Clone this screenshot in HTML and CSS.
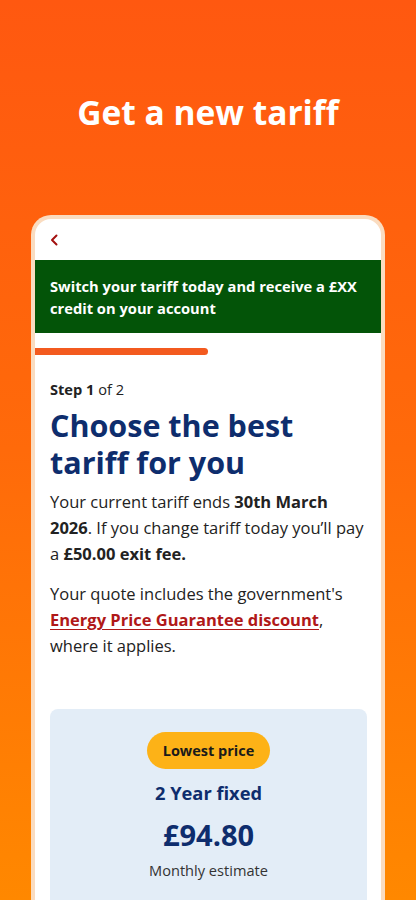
FILE: index.html
```html
<!DOCTYPE html>
<html lang="en">
<head>
    <meta charset="UTF-8">
    <meta name="viewport" content="width=device-width, initial-scale=1.0">
    <title>Get a new tariff</title>
    <link rel="stylesheet" href="styles.css">
</head>
<body>
    <header class="promo">
        <h1>Get a new tariff</h1>
    </header>
    <main class="phone">
        <div class="topbar">
            <a class="back" href="#" aria-label="Back">
                <svg width="8" height="12" viewBox="0 0 8 12"><path d="M6.5 1.5 2 6l4.5 4.5" fill="none" stroke="#a3110f" stroke-width="2" stroke-linecap="round" stroke-linejoin="round"/></svg>
            </a>
        </div>
        <div class="banner">Switch your tariff today and receive a £XX credit on your account</div>
        <div class="progress"></div>
        <section class="content">
            <p class="step"><strong>Step 1</strong> of 2</p>
            <h2>Choose the best tariff for you</h2>
            <p>Your current tariff ends <strong>30th March 2026</strong>. If you change tariff today you’ll pay a <strong>£50.00 exit fee.</strong></p>
            <p>Your quote includes the government's <a href="#">Energy Price Guarantee discount</a>, where it applies.</p>
            <div class="tariff">
                <span class="badge">Lowest price</span>
                <h3>2 Year fixed</h3>
                <p class="price">£94.80</p>
                <p class="note">Monthly estimate</p>
            </div>
        </section>
    </main>
</body>
</html>
```
FILE: styles.css
```css
body { font-family: 'Open Sans', 'Noto Sans', sans-serif; margin: 0; padding: 0; color: #222; background: linear-gradient(180deg, #ff5810 0%, #ff6a0a 50%, #ff8800 100%); height: 900px; overflow: hidden; }
.promo { padding-top: 92px; text-align: center; }
h1 { margin: 0; font-size: 33.5px; line-height: 40px; font-weight: 700; color: white; }
.phone { margin: 83px 31px 0; background: white; border: 4px solid #fadcc0; border-bottom: 0; border-radius: 20px 20px 0 0; height: 700px; }
.topbar { height: 41px; display: flex; align-items: center; padding-left: 15px; }
.back { display: flex; }
.banner { background: #035408; color: white; font-size: 14.7px; line-height: 22px; font-weight: 700; padding: 15px 15px 14px; }
.progress { margin-top: 15px; width: 173px; height: 7px; background: #f35a1f; border-radius: 0 4px 4px 0; }
.content { padding: 0 14px 0 15px; }
.content p { font-size: 16.5px; line-height: 26px; margin: 0 0 14px; }
.content .step { font-size: 14.6px; line-height: 22px; margin: 23px 0 7px; }
h2 { font-size: 30.5px; line-height: 37px; color: #0e2d6d; margin: 0 0 8px; font-weight: 700; }
.content a { color: #b01818; font-weight: 700; text-decoration: underline; text-underline-offset: 3px; }
.tariff { margin-top: 50px; background: #e3edf7; border-radius: 8px; padding-top: 23px; text-align: center; height: 300px; }
.badge { display: inline-block; background: #fdb217; color: #1a1a1a; font-size: 14.5px; font-weight: 700; line-height: 37px; padding: 0 16px; border-radius: 19px; }
h3 { font-size: 18.3px; line-height: 26px; color: #0e2d6d; margin: 11px 0 0; font-weight: 700; }
.tariff .price { font-size: 29px; line-height: 40px; font-weight: 700; color: #0e2d6d; margin: 9px 0 0; }
.tariff .note { font-size: 14.6px; line-height: 22px; color: #333; margin: 4px 0 0; }
```
